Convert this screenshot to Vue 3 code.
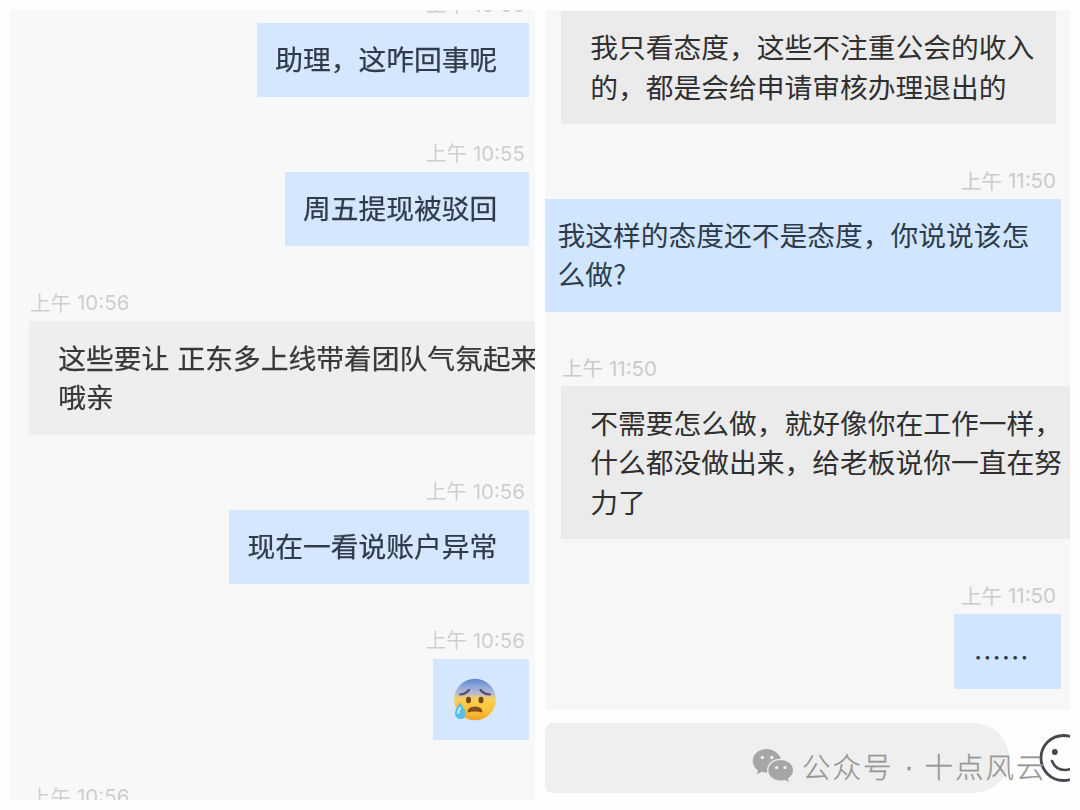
<script setup>
const leftChat = [
  { side: 'out', time: '10:55', lines: ['助理，这咋回事呢'] },
  { side: 'out', time: '10:55', lines: ['周五提现被驳回'] },
  { side: 'in', time: '10:56', lines: ['这些要让 正东多上线带着团队气氛起来', '哦亲'] },
  { side: 'out', time: '10:56', lines: ['现在一看说账户异常'] },
  { side: 'out', time: '10:56', emoji: true, lines: [] },
  { side: 'in', time: '10:56', lines: [] }
]
const rightChat = [
  { side: 'in', time: '11:50', lines: ['我只看态度，这些不注重公会的收入', '的，都是会给申请审核办理退出的'] },
  { side: 'out', time: '11:50', kind: 'wide', lines: ['我这样的态度还不是态度，你说说该怎', '么做?'] },
  { side: 'in', time: '11:50', lines: ['不需要怎么做，就好像你在工作一样，', '什么都没做出来，给老板说你一直在努', '力了'] },
  { side: 'out', time: '11:50', kind: 'dots', lines: ['……'] }
]
</script>

<template>
  <main class="board">
    <section class="pane soft">
      <div class="thread">
        <article v-for="(m, i) in leftChat" :key="i" class="msg" :class="m.side">
          <div class="time"><span class="half">上午</span><span class="num">{{ m.time }}</span></div>
          <div v-if="m.emoji" class="bubble face">
            <svg width="46" height="46" viewBox="0 0 46 46">
              <defs>
                <linearGradient id="skin" x1="0" y1="0" x2="0" y2="1">
                  <stop offset="0" stop-color="#5b86cf" />
                  <stop offset=".2" stop-color="#91a9dc" />
                  <stop offset=".34" stop-color="#b6b7d3" />
                  <stop offset=".42" stop-color="#dcc595" />
                  <stop offset=".5" stop-color="#fbd052" />
                  <stop offset=".8" stop-color="#fcbf36" />
                  <stop offset="1" stop-color="#ee9f25" />
                </linearGradient>
              </defs>
              <circle cx="23" cy="22.500" r="20.800" fill="url(#skin)" />
              <path d="M8 17.500q6-.5 9-4.500M28.500 13q3 4 9.500 4.500" fill="none" stroke="#4e5374" stroke-width="2.200" stroke-linecap="round" />
              <ellipse cx="16.500" cy="23" rx="2.500" ry="3.200" fill="#704711" />
              <ellipse cx="29" cy="23" rx="2.500" ry="3.200" fill="#704711" />
              <path d="M15.500 35.500q0-6 7.500-6t7.500 6q-7.500-2-15 0z" fill="#845019" />
              <path d="M8 25.500q-5.500 7-5 11.500 1 5 5.500 5 5 0 5-5 0-4.500-5.500-11.500z" fill="#59bdec" />
              <path d="M8 31q-2 3-1.500 5" fill="none" stroke="#d0f2ff" stroke-width="2" stroke-linecap="round" />
            </svg>
          </div>
          <div v-else-if="m.lines.length" class="bubble">
            <p v-for="l in m.lines" :key="l">{{ l }}</p>
          </div>
        </article>
      </div>
    </section>

    <section class="pane sharp">
      <div class="history">
        <div class="thread">
          <article v-for="(m, i) in rightChat" :key="i" class="msg" :class="[m.side, m.kind]">
            <div class="time"><span class="half">上午</span><span class="num">{{ m.time }}</span></div>
            <div class="bubble">
              <p v-for="l in m.lines" :key="l">{{ l }}</p>
            </div>
          </article>
        </div>
      </div>
      <footer class="composer">
        <div class="field"></div>
        <svg class="smile" width="48" height="50" viewBox="0 0 48 50">
          <circle cx="24.500" cy="25" r="22.500" fill="none" stroke="#44484f" stroke-width="2.800" />
          <circle cx="15.800" cy="19" r="2.900" fill="#44484f" />
          <circle cx="37" cy="19" r="2.900" fill="#44484f" />
          <path d="M13 28q3.500 9 13 9t13-9" fill="none" stroke="#44484f" stroke-width="2.600" stroke-linecap="round" />
        </svg>
      </footer>
    </section>

    <div class="watermark">
      <svg width="42" height="35" viewBox="0 0 42 35">
        <path d="M14.500 1C6.500 1 .8 6.200 .8 13c0 4 2 7.200 5.200 9.400L4.700 26.500l5-2.700c1.500.5 3.200.7 4.800.7C22.500 24.500 29 19.300 29 13S22.500 1 14.500 1z" fill="#a6a6a6" />
        <path d="M28.500 11.300c-7.300 0-12.800 4.800-12.800 10.900s5.500 11 12.800 11c1.500 0 3-.2 4.300-.6l5 2.400-1.200-4.300c3-2 5-5 5-8.500 0-6.100-5.800-10.900-13.100-10.900z" fill="#a6a6a6" stroke="#efefef" stroke-width="1.300" />
        <circle cx="10.300" cy="9.500" r="1.700" fill="#f3f3f3" />
        <circle cx="19.800" cy="9.500" r="1.700" fill="#f3f3f3" />
        <circle cx="24.600" cy="19.500" r="1.600" fill="#f3f3f3" />
        <circle cx="33" cy="19.500" r="1.600" fill="#f3f3f3" />
      </svg>
      <span class="label">公众号</span><span class="dot">·</span><span class="label">十点风云</span>
    </div>
  </main>
</template>

<style>
body {
  margin: 0;
  background: #fff;
}
</style>

<style scoped>
.board {
  position: relative;
  box-sizing: border-box;
  width: 1080px;
  height: 810px;
  padding: 10px;
  display: flex;
  gap: 10px;
  overflow: hidden;
  background: #fefefe;
  font-family: "Noto Sans CJK SC", sans-serif;
}
.pane {
  width: 525px;
  height: 790px;
  overflow: hidden;
  display: flex;
  flex-direction: column;
}
.soft {
  background: #f8f8f8;
}
.history {
  height: 700px;
  overflow: hidden;
  background: #f7f7f7;
}
.thread {
  display: flex;
  flex-direction: column;
}
.soft .thread {
  margin-top: -62.500px;
  filter: blur(0.7px);
}
.sharp .thread {
  margin-top: -73.500px;
}
.msg {
  display: flex;
  flex-direction: column;
  align-items: flex-start;
  flex: none;
}
.in {
  padding-left: 19px;
}
.sharp .in {
  padding-left: 16px;
}
.out {
  align-items: flex-end;
  padding-right: 6px;
}
.sharp .out {
  padding-right: 9px;
}
.time {
  height: 75px;
  box-sizing: border-box;
  padding: 42px 4px 0 1px;
  display: flex;
  gap: 6px;
  font-size: 20.500px;
  line-height: 30px;
  color: #cbcbcb;
  white-space: nowrap;
}
.soft .time {
  color: #cecece;
}
.sharp .time {
  height: 74.700px;
  padding-right: 5px;
}
.half {
  margin-top: -1.500px;
}
.num {
  font-family: Inter, "Liberation Sans", sans-serif;
  font-size: 20.500px;
}
.bubble {
  padding: 16.700px 31.700px 18.300px 18.300px;
  background: #d1e6fe;
  color: #2c3c4c;
  font-size: 27.750px;
  line-height: 39.300px;
  white-space: nowrap;
  word-spacing: 2px;
}
.soft .bubble {
  background: #d4e7ff;
  color: #303c49;
  -webkit-text-stroke: 0.25px currentColor;
}
.in .bubble {
  padding: 16.700px 21.700px 18.300px 29.300px;
  background: #ebebeb;
  color: #303030;
}
.soft .in .bubble {
  background: #eee;
  color: #383838;
}
.sharp .bubble {
  padding-top: 16px;
  padding-bottom: 18px;
  line-height: 39.400px;
}
.sharp .msg:nth-child(3) .bubble {
  padding-top: 16.500px;
  padding-bottom: 18.500px;
}
.sharp .wide .bubble {
  padding-left: 12.300px;
}
.sharp .dots .bubble {
  padding: 22.500px 32px 12.700px 19px;
}
.bubble p {
  margin: 0;
}
.soft .face {
  display: flex;
  padding: 18px 31px 17.500px 19px;
}
.composer {
  height: 90px;
  display: flex;
  padding-top: 13px;
  box-sizing: border-box;
  background: #fefefe;
}
.field {
  flex: none;
  width: 464px;
  height: 70px;
  border-radius: 8px 35px 35px 8px;
  background: #efefef;
}
.smile {
  flex: none;
  margin: 9.500px 0 0 30px;
}
.watermark {
  position: absolute;
  left: 752px;
  top: 748px;
  display: flex;
  color: #969696;
  font-size: 28.500px;
  font-weight: 300;
  line-height: 36px;
  letter-spacing: 2px;
  white-space: nowrap;
  -webkit-text-stroke: 0.3px currentColor;
}
.watermark .label:first-of-type {
  margin-left: 8px;
}
.dot {
  width: 31px;
  text-align: center;
  letter-spacing: 0;
  font-family: "Liberation Sans", sans-serif;
}
</style>
